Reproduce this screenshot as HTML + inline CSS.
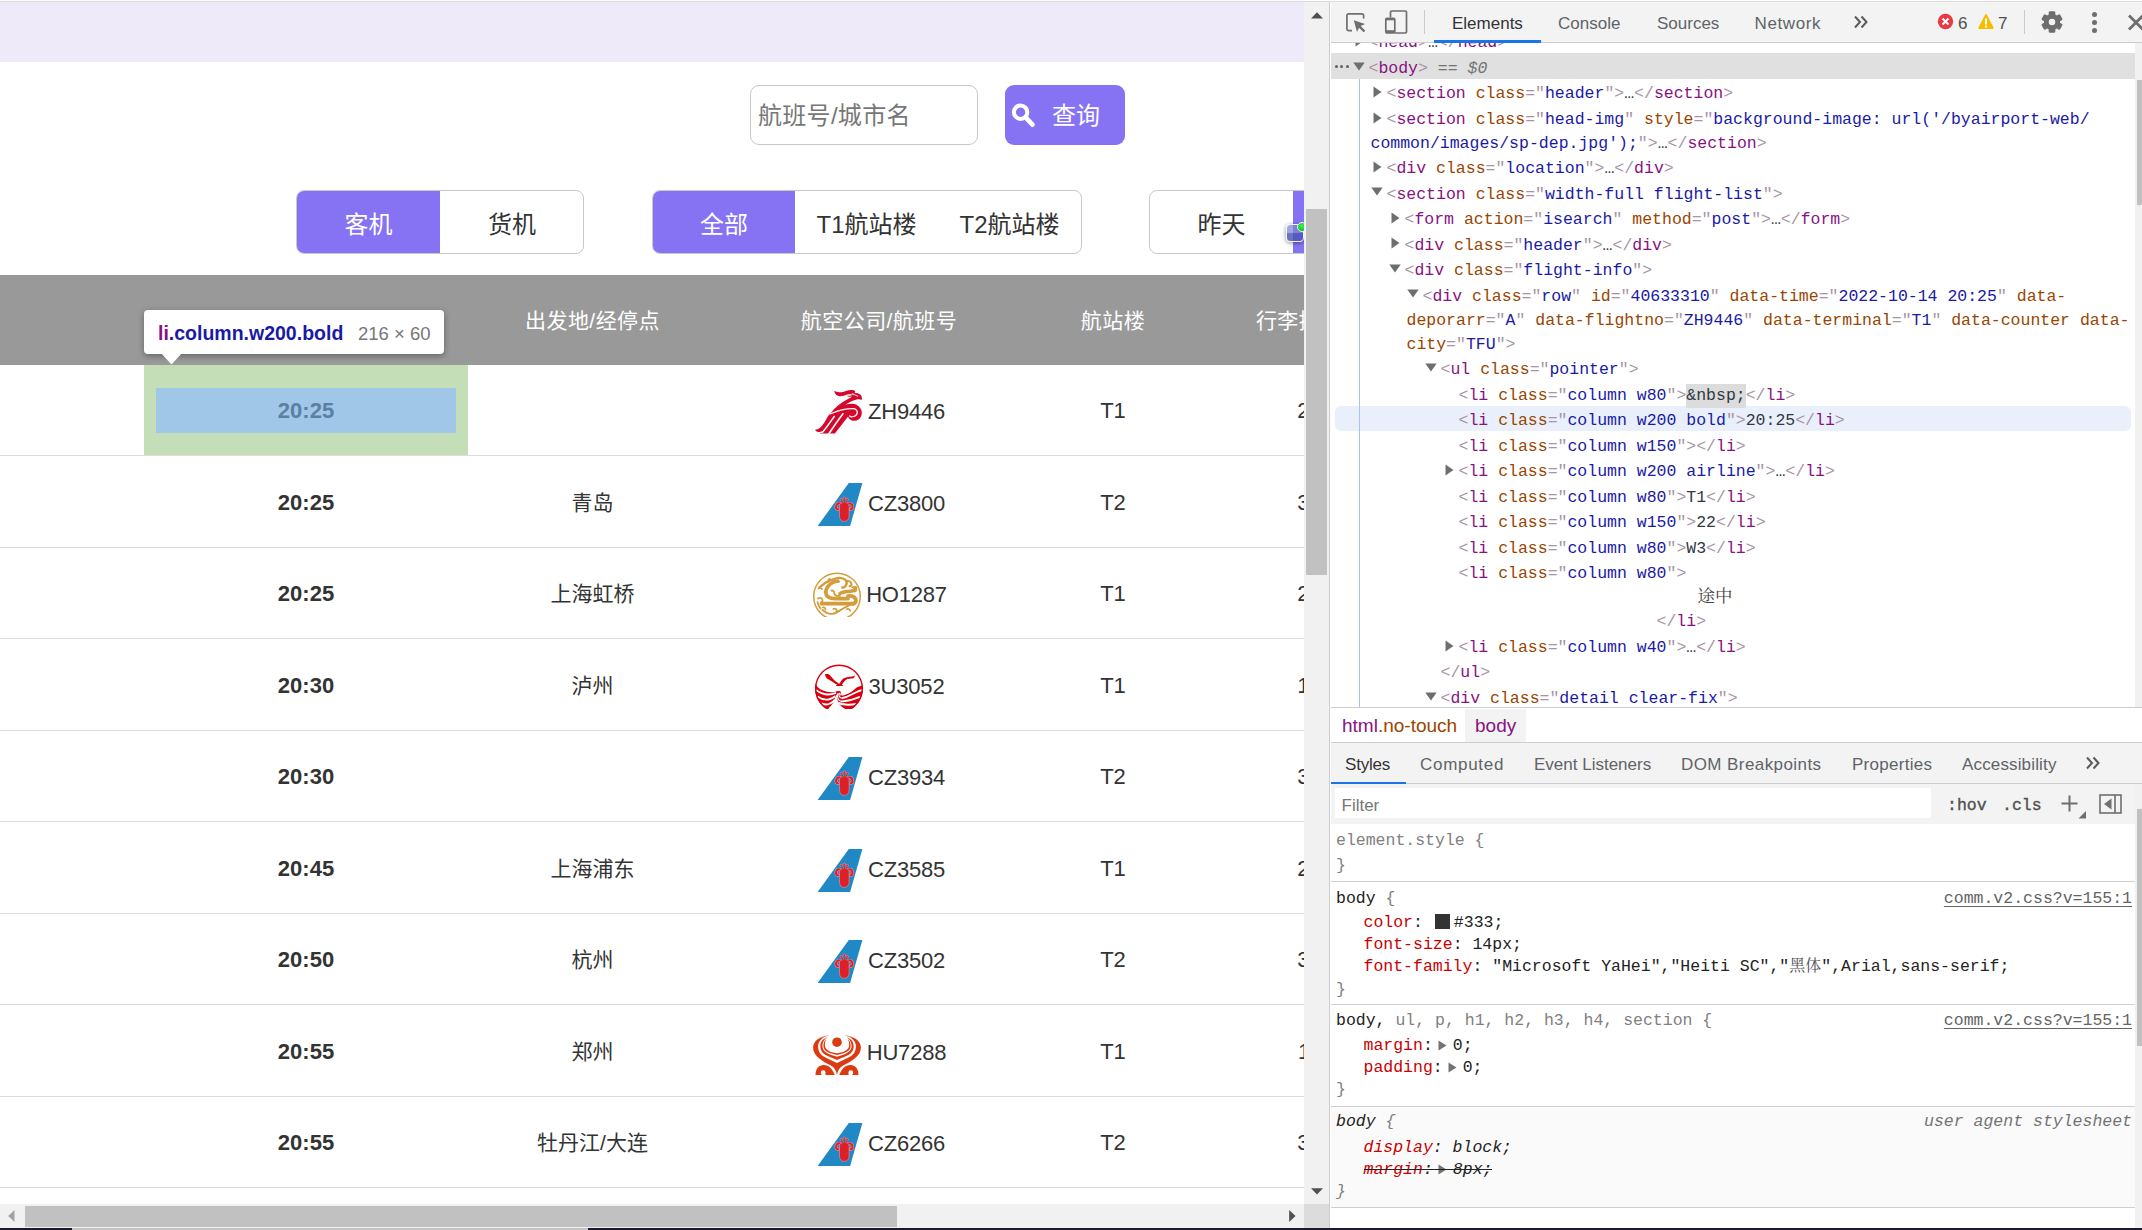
<!DOCTYPE html>
<html lang="zh-CN"><head><meta charset="utf-8"><title>Flight info</title>
<style>
*{box-sizing:border-box;margin:0;padding:0}
html,body{width:2142px;height:1230px;overflow:hidden;background:#fff}
body{position:relative;font-family:"Liberation Sans","Noto Sans CJK SC",sans-serif;color:#333}
.a{position:absolute}
.t{position:absolute;white-space:pre}
#page{position:absolute;left:0;top:0;width:1304px;height:1204px;overflow:hidden;background:#fff}
.band{left:0;top:0;width:1304px;height:62px;background:#efeaf9}
.inp{left:750px;top:85px;width:228px;height:60px;border:1px solid #c8c8c8;border-radius:9px;background:#fff}
.ph{left:758px;top:86.3px;height:60px;line-height:60px;font-size:24px;letter-spacing:.3px;color:#777}
.btn{left:1005px;top:85px;width:120px;height:60px;border-radius:9px;background:#8673f4}
.btnt{left:1052px;top:86.3px;height:60px;line-height:60px;font-size:24px;color:#fff}
.grp{top:190px;height:64px;border:1px solid #c8c8c8;border-radius:8px;background:#fff;overflow:hidden}
.tab{position:absolute;top:0;height:62px;line-height:67px;text-align:center;font-size:24px;color:#333;white-space:pre}
.tab.on{background:#8673f4;color:#fff}
.hdr{left:0;top:275px;width:1500px;height:90px;background:#999}
.hc{position:absolute;top:0;height:90px;line-height:92px;text-align:center;font-size:21px;letter-spacing:.45px;color:#fff;white-space:pre}
.row{position:absolute;left:0;width:1500px;height:91.5px}
.row:after{content:'';position:absolute;left:0;top:90px;width:1500px;height:1px;background:#dcdcdc}
.c{position:absolute;top:0;height:90px;line-height:92px;text-align:center;font-size:21px;color:#333;white-space:pre}
.c.b{font-weight:bold;font-size:22px;line-height:91px}
.c.l{font-size:22px}
.air{position:absolute;left:717px;width:324px;top:0;height:90px;text-align:center;white-space:nowrap;font-size:0}
.lg{display:inline-block;position:relative;width:48px;height:45px;vertical-align:top;margin-top:24px;clip-path:inset(0 -8px 0 -8px)}
.fn{display:inline-block;vertical-align:top;height:90px;line-height:93px;font-size:22px;letter-spacing:-0.2px;margin-left:7px;color:#333}

.m{font-family:"Liberation Mono",monospace;font-size:16.5px}
.u{font-family:"Liberation Sans",sans-serif;font-size:17px;color:#333}
.dl{position:absolute;white-space:pre;height:24px;line-height:24px;font-family:"Liberation Mono",monospace;font-size:16.5px;color:#303942}
.sl{position:absolute;white-space:pre;height:22px;line-height:22px;font-family:"Liberation Mono",monospace;font-size:16.5px;color:#222}
.k{color:#a894a6}.tn{color:#881280}.an{color:#994500}.av{color:#1a1aa6}.pn{color:#c80000}.g{color:#808080}
</style></head>
<body>
<div id="page">
<div class="a band"></div>
<div class="a inp"></div><div class="t ph">航班号/城市名</div>
<div class="a btn"></div>
<svg class="a" style="left:1009px;top:99px" width="30" height="30" viewBox="0 0 30 30"><circle cx="11.600" cy="13.200" r="6.700" fill="none" stroke="#fff" stroke-width="4"/><path d="M17 18.800L23.500 25.700" stroke="#fff" stroke-width="4.600" stroke-linecap="round"/></svg>
<div class="t btnt">查询</div>
<div class="a grp" style="left:296px;width:288px"><div class="tab on" style="left:0;width:143px">客机</div><div class="tab" style="left:143px;width:144px">货机</div></div>
<div class="a grp" style="left:652px;width:430px"><div class="tab on" style="left:0;width:142px">全部</div><div class="tab" style="left:142px;width:143px">T1航站楼</div><div class="tab" style="left:285px;width:143px">T2航站楼</div></div>
<div class="a grp" style="left:1149px;width:430px"><div class="tab" style="left:0;width:143px">昨天</div><div class="tab on" style="left:143px;width:143px">今天</div></div>
<div class="a hdr">
<div class="hc" style="left:468px;width:249px">出发地/经停点</div>
<div class="hc" style="left:717px;width:324px">航空公司/航班号</div>
<div class="hc" style="left:1041px;width:144px">航站楼</div>
<div class="hc" style="left:1185px;width:249px">行李提取处</div>
</div>
<div class="row" style="top:365.0px">
<div class="c b" style="left:144px;width:324px">20:25</div>
<div class="air"><span class="lg"><svg width="60" height="52" viewBox="0 0 60 52" style="position:absolute;left:-2.7px;top:-4.0px;overflow:visible"><g fill="#d5072a">
<path d="M24.1 6.100C28 8 33 7 36 5.900C39 4.900 42.500 4.600 44.200 5.400C45.200 6 45.400 7 45 7.700L42.500 8.600C41 9.300 39 9.400 37.200 9.500C34.500 10.700 32 11.300 29.600 11.200C27 11 25 9.500 24.100 6.100Z"/>
<path d="M21.100 27.700C25 22.500 31 17.500 37.500 14.300C39.500 13.300 41 12.500 42.200 11.600L39.500 11.800C38.300 11.800 37.300 11.300 37.200 10.700C38.500 10.700 40 10.300 41 9.500C42.500 8.300 44 7.800 46 7.900C48.500 8 50.500 9.200 51.400 11C52 12.300 52.200 13.500 52 14.700C50.300 14.100 48.400 14 46.500 14.400C42.500 15.400 38.600 17.600 35.100 19.900C37.500 18.900 40 18.600 42.300 18.800C45 19 47.300 19.900 48.900 21.500C50.800 23.300 51.900 25.700 51.800 28C51.700 30.600 50.600 33 48.500 34.500C46.500 35.900 44 36.200 41.800 35.400C39.800 34.600 38.400 33.200 38 31.500L40 29L24.900 48.600H9.700L11 46.900L8.500 46.900C6.800 46.800 5.300 46 5.100 44.800C7 44.600 9 43.800 10.600 42.300C13.500 39.500 15.500 35.500 17.500 32C18.500 30.500 19.500 29 21.100 27.700Z"/></g>
<g fill="none" stroke="#fff" stroke-linecap="round">
<path d="M20 29C28 25.600 37 23.500 43.500 23.700C46 24 47.600 25.800 47.300 27.600C47 29.500 45.500 30.800 43.500 31.500" stroke-width="1.300"/>
<path d="M42.500 31.800C41.500 32.100 40.300 31.800 39.600 31" stroke-width="1.200"/>
<path d="M24.200 31.500C21 36 17 42 12.700 47L10.500 47.500" stroke-width="1.600"/>
<path d="M33 28.800C28.500 34.500 23.500 42 18.600 49" stroke-width="1.600"/>
<path d="M42.600 9.200C44.500 9.700 46.300 10.400 47.800 11.200" stroke-width="0.900"/>
<path d="M38.500 10.600C39.800 10.800 41 10.400 42 9.700" stroke-width="0.800"/>
</g></svg></span><span class="fn">ZH9446</span></div>
<div class="c l" style="left:1041px;width:144px">T1</div>
<div class="c l" style="left:1185px;width:249px">22</div>
</div>
<div class="row" style="top:456.5px">
<div class="c b" style="left:144px;width:324px">20:25</div>
<div class="c" style="left:468px;width:249px">青岛</div>
<div class="air"><span class="lg" style="height:45.5px"><svg width="50" height="46" viewBox="0 0 50 46" style="position:absolute;left:0.0px;top:0.0px;overflow:visible"><path d="M4.400 45.300L35.800 2.100H49.400L37 45.300z" fill="#1f88c5"/>
<g fill="none" stroke="#f0a9ab" stroke-width="3" stroke-linecap="round"><path d="M27 22.600C22.800 21.300 21.800 27.600 25 28.500M35.600 22.600C39.800 21.300 40.800 27.600 37.600 28.500"/></g>
<g fill="none" stroke="#df1f27" stroke-width="2.100" stroke-linecap="round"><path d="M27 22.600C22.800 21.300 21.800 27.600 25 28.500M35.600 22.600C39.800 21.300 40.800 27.600 37.600 28.500"/></g>
<g fill="#df1f27" stroke="#f0a9ab" stroke-width="0.500">
<path d="M26.500 25C26.500 23 27.600 21.800 29.100 21.800L30.100 21.800L31.300 19.500L32.500 21.800L33.500 21.800C35 21.800 36.100 23 36.100 25L36.100 35C36.100 38.500 34.100 40.400 31.300 40.400C28.500 40.400 26.500 38.500 26.500 35Z"/>
<circle cx="31.300" cy="17.200" r="1.250"/><circle cx="28.300" cy="18.500" r="1.150"/><circle cx="34.300" cy="18.500" r="1.150"/></g>
<g fill="none" stroke="#df1f27" stroke-width="0.900"><path d="M31.300 18V21.500M28.500 19.300L29.900 22M34.100 19.300L32.700 22"/></g></svg></span><span class="fn">CZ3800</span></div>
<div class="c l" style="left:1041px;width:144px">T2</div>
<div class="c l" style="left:1185px;width:249px">31</div>
</div>
<div class="row" style="top:548.0px">
<div class="c b" style="left:144px;width:324px">20:25</div>
<div class="c" style="left:468px;width:249px">上海虹桥</div>
<div class="air"><span class="lg"><svg width="60" height="56" viewBox="0 0 60 56" style="position:absolute;left:-3.4px;top:-6.0px;overflow:visible"><g fill="none" stroke="#d29d3a" stroke-linecap="round" stroke-linejoin="round">
<circle cx="29" cy="30.500" r="23.300" stroke-width="1.500"/>
<path d="M11.500 21.300C14.500 18.500 18 16 21.500 14.600C24.500 13.500 27.500 12.200 30.700 11.900C33.500 11.700 36 12.300 37.500 14C38.900 15.700 38.800 18.300 37.600 20C36.800 21.200 35.500 21.700 34.300 21.500" stroke-width="2.400"/>
<path d="M38.500 15.300C40.500 14.600 42.700 15.700 43.400 17.600C43.900 19 43 20.200 41.500 20.300" stroke-width="2"/>
<path d="M21.500 13L20 15.500" stroke-width="2.400"/>
<path d="M30.500 15C26 15.500 22.300 17.300 20 20.300C18 23 17.300 26.300 18.500 29.200C19.800 31.600 23 32.600 26.500 32.600H40" stroke-width="3.700"/>
<path d="M23.500 24.500C25.200 24.300 26.300 25.500 26.300 27C26.300 28.300 27.300 29.500 29 29.800H32" stroke-width="1.800"/>
<path d="M32 27.500C35 25.800 39 25.500 42.500 25.300C45 25.100 47 23.800 47.600 22" stroke-width="3.600"/>
<path d="M44 21.300C45.300 20.300 47.300 20.700 48 22.200C48.700 23.700 48 25.200 46.700 25.700" stroke-width="1.700"/>
<path d="M40 30C43 29.500 46.500 30.500 47.600 33C48.500 35.200 47.500 37.300 45 38" stroke-width="3.800"/>
<path d="M13.500 37.700H45" stroke-width="3.700"/>
<path d="M10 32.500C11.500 31.300 13.800 31.800 14.400 33.500C14.800 34.600 14.300 35.600 13.300 35.900M10.300 22.500C11.500 21.300 13.500 21.700 14 23.200M9.500 36C10 38.500 11 40.500 12.500 42.500" stroke-width="1.700"/>
<path d="M14.500 41.500C16 41 17.500 42 17.500 43.500M25.300 43C26.800 42 28.800 43 28.800 44.800C28.800 46 28 46.800 27 47M38.800 43.200C40.300 42.500 42 43.300 42.200 44.800" stroke-width="1.700"/>
<path d="M47.800 35.500C44 38 39 40.500 35 42.500C31.500 44.500 29 47 25 47.700C21 48.300 17 46.500 14.500 43.900" stroke-width="1.900"/>
</g>
<circle cx="32.200" cy="14.300" r="1" fill="#fff"/></svg></span><span class="fn">HO1287</span></div>
<div class="c l" style="left:1041px;width:144px">T1</div>
<div class="c l" style="left:1185px;width:249px">23</div>
</div>
<div class="row" style="top:639.5px">
<div class="c b" style="left:144px;width:324px">20:30</div>
<div class="c" style="left:468px;width:249px">泸州</div>
<div class="air"><span class="lg" style="height:45.5px"><svg width="60" height="54" viewBox="0 0 60 54" style="position:absolute;left:-3.8px;top:-5.5px;overflow:visible"><defs><clipPath id="cpU"><circle cx="29" cy="30.500" r="24"/></clipPath></defs>
<g clip-path="url(#cpU)"><path d="M5 25.500C7 29 10 31.500 13.200 32.600C17 34.200 21 34.600 24.500 34C26.500 33.600 28.500 32.800 30.300 33.200C31.300 34.500 31 36.500 31.600 37.800C35 37.300 37.500 36.300 39.500 35.100C42.500 33.300 44 31.300 46.100 29.900C48 28.700 50 28 53 27.500V56H5z" fill="#d7000f"/>
<g fill="none" stroke="#fff" stroke-width="1.900">
<path d="M6 32C10 34.800 14 36.500 18 36.500C21 36.500 23.500 35.800 26 34.800"/>
<path d="M7.500 38.500C11 41 15 42 18.500 41.500C21 41 23.300 40 25.300 38.300"/>
<path d="M11.500 45.300C14.500 46.800 17.500 46.800 20 45.500C22 44.500 23.500 43.300 24.800 41.800"/>
<path d="M52 32C48 33 44.500 35 41.500 36.500C38.500 38.200 35 39.800 31.600 40.300"/>
<path d="M50 39C46.500 40 43 41.500 39.500 42.300C36.500 43 33.500 43.500 30.700 43.300"/>
<path d="M46 46C42.500 46.800 39 47 35.500 46.500C33 46.200 30.500 45.800 28.500 45"/>
</g>
<g fill="none" stroke="#fff" stroke-width="1.100"><path d="M31.600 40.300C29.700 39.600 28.500 37.500 28.900 35M30.700 43.300C28.300 42.200 27 39.200 27.600 35.500M28.500 45C26.800 43.300 26 40.300 26.400 36.800M29.500 34.800C30 35.600 30.300 36.500 30.600 37.300"/></g>
<path d="M25.300 38.300C24.800 43 22 47.800 17.300 51.500L36 51.500C31.500 49 27.800 45 26.200 40.500C25.800 39.800 25.500 39 25.300 38.300z" fill="#fff"/>
</g>
<circle cx="29" cy="30.500" r="23.300" fill="none" stroke="#d7000f" stroke-width="1.400"/>
<path d="M14.900 16.400C16.500 15.900 18 16.100 18.900 16.500C20.500 17.500 21.600 19.200 22.800 20.600C24.500 22.500 26.500 24.200 28.600 25.400L29.800 25.400C30.500 23.500 31.800 21.900 33.400 20.600C35 19.500 36.800 19.100 38.600 18.900C40.800 18.700 43 18.700 44.800 17.500C44.900 18.500 44.500 19.300 43.900 19.800C43.200 20.500 42.300 20.600 41.300 20.600C40 20.700 38.600 20.700 37.300 21.100C35.700 21.800 34.400 23.100 33.400 24.600C32.800 25.500 32.300 26.300 31.800 27L33.400 27.500L33 28.100H26.200L25.900 27.500L27.400 26.800C25.700 26.200 24.200 25.200 22.800 24.100C20.800 22.600 18.900 21.800 17.600 21.100C16.300 19.800 15.300 18.200 14.900 16.400Z" fill="#d7000f"/></svg></span><span class="fn">3U3052</span></div>
<div class="c l" style="left:1041px;width:144px">T1</div>
<div class="c l" style="left:1185px;width:249px">12</div>
</div>
<div class="row" style="top:731.0px">
<div class="c b" style="left:144px;width:324px">20:30</div>
<div class="air"><span class="lg"><svg width="50" height="46" viewBox="0 0 50 46" style="position:absolute;left:0.0px;top:0.0px;overflow:visible"><path d="M4.400 45.300L35.800 2.100H49.400L37 45.300z" fill="#1f88c5"/>
<g fill="none" stroke="#f0a9ab" stroke-width="3" stroke-linecap="round"><path d="M27 22.600C22.800 21.300 21.800 27.600 25 28.500M35.600 22.600C39.800 21.300 40.800 27.600 37.600 28.500"/></g>
<g fill="none" stroke="#df1f27" stroke-width="2.100" stroke-linecap="round"><path d="M27 22.600C22.800 21.300 21.800 27.600 25 28.500M35.600 22.600C39.800 21.300 40.800 27.600 37.600 28.500"/></g>
<g fill="#df1f27" stroke="#f0a9ab" stroke-width="0.500">
<path d="M26.500 25C26.500 23 27.600 21.800 29.100 21.800L30.100 21.800L31.300 19.500L32.500 21.800L33.500 21.800C35 21.800 36.100 23 36.100 25L36.100 35C36.100 38.500 34.100 40.400 31.300 40.400C28.500 40.400 26.500 38.500 26.500 35Z"/>
<circle cx="31.300" cy="17.200" r="1.250"/><circle cx="28.300" cy="18.500" r="1.150"/><circle cx="34.300" cy="18.500" r="1.150"/></g>
<g fill="none" stroke="#df1f27" stroke-width="0.900"><path d="M31.300 18V21.500M28.500 19.300L29.900 22M34.100 19.300L32.700 22"/></g></svg></span><span class="fn">CZ3934</span></div>
<div class="c l" style="left:1041px;width:144px">T2</div>
<div class="c l" style="left:1185px;width:249px">32</div>
</div>
<div class="row" style="top:822.5px">
<div class="c b" style="left:144px;width:324px">20:45</div>
<div class="c" style="left:468px;width:249px">上海浦东</div>
<div class="air"><span class="lg" style="height:45.5px"><svg width="50" height="46" viewBox="0 0 50 46" style="position:absolute;left:0.0px;top:0.0px;overflow:visible"><path d="M4.400 45.300L35.800 2.100H49.400L37 45.300z" fill="#1f88c5"/>
<g fill="none" stroke="#f0a9ab" stroke-width="3" stroke-linecap="round"><path d="M27 22.600C22.800 21.300 21.800 27.600 25 28.500M35.600 22.600C39.800 21.300 40.800 27.600 37.600 28.500"/></g>
<g fill="none" stroke="#df1f27" stroke-width="2.100" stroke-linecap="round"><path d="M27 22.600C22.800 21.300 21.800 27.600 25 28.500M35.600 22.600C39.800 21.300 40.800 27.600 37.600 28.500"/></g>
<g fill="#df1f27" stroke="#f0a9ab" stroke-width="0.500">
<path d="M26.500 25C26.500 23 27.600 21.800 29.100 21.800L30.100 21.800L31.300 19.500L32.500 21.800L33.500 21.800C35 21.800 36.100 23 36.100 25L36.100 35C36.100 38.500 34.100 40.400 31.300 40.400C28.500 40.400 26.500 38.500 26.500 35Z"/>
<circle cx="31.300" cy="17.200" r="1.250"/><circle cx="28.300" cy="18.500" r="1.150"/><circle cx="34.300" cy="18.500" r="1.150"/></g>
<g fill="none" stroke="#df1f27" stroke-width="0.900"><path d="M31.300 18V21.500M28.500 19.300L29.900 22M34.100 19.300L32.700 22"/></g></svg></span><span class="fn">CZ3585</span></div>
<div class="c l" style="left:1041px;width:144px">T1</div>
<div class="c l" style="left:1185px;width:249px">21</div>
</div>
<div class="row" style="top:914.0px">
<div class="c b" style="left:144px;width:324px">20:50</div>
<div class="c" style="left:468px;width:249px">杭州</div>
<div class="air"><span class="lg"><svg width="50" height="46" viewBox="0 0 50 46" style="position:absolute;left:0.0px;top:0.0px;overflow:visible"><path d="M4.400 45.300L35.800 2.100H49.400L37 45.300z" fill="#1f88c5"/>
<g fill="none" stroke="#f0a9ab" stroke-width="3" stroke-linecap="round"><path d="M27 22.600C22.800 21.300 21.800 27.600 25 28.500M35.600 22.600C39.800 21.300 40.800 27.600 37.600 28.500"/></g>
<g fill="none" stroke="#df1f27" stroke-width="2.100" stroke-linecap="round"><path d="M27 22.600C22.800 21.300 21.800 27.600 25 28.500M35.600 22.600C39.800 21.300 40.800 27.600 37.600 28.500"/></g>
<g fill="#df1f27" stroke="#f0a9ab" stroke-width="0.500">
<path d="M26.500 25C26.500 23 27.600 21.800 29.100 21.800L30.100 21.800L31.300 19.500L32.500 21.800L33.500 21.800C35 21.800 36.100 23 36.100 25L36.100 35C36.100 38.500 34.100 40.400 31.300 40.400C28.500 40.400 26.500 38.500 26.500 35Z"/>
<circle cx="31.300" cy="17.200" r="1.250"/><circle cx="28.300" cy="18.500" r="1.150"/><circle cx="34.300" cy="18.500" r="1.150"/></g>
<g fill="none" stroke="#df1f27" stroke-width="0.900"><path d="M31.300 18V21.500M28.500 19.300L29.900 22M34.100 19.300L32.700 22"/></g></svg></span><span class="fn">CZ3502</span></div>
<div class="c l" style="left:1041px;width:144px">T2</div>
<div class="c l" style="left:1185px;width:249px">33</div>
</div>
<div class="row" style="top:1005.5px">
<div class="c b" style="left:144px;width:324px">20:55</div>
<div class="c" style="left:468px;width:249px">郑州</div>
<div class="air"><span class="lg" style="height:45.5px"><svg width="60" height="54" viewBox="0 0 60 54" style="position:absolute;left:-3.3px;top:-3.5px;overflow:visible"><defs><linearGradient id="hf" x1="0" y1="0" x2="0" y2="1"><stop offset="0" stop-color="#fff"/><stop offset="1" stop-color="#fff" stop-opacity="0"/></linearGradient></defs><path d="M29 49.500C28.600 45 26.500 41.500 22.500 39.300C15 35.500 5.100 30.500 5.100 21.500C5.100 15 12 10.500 21 8.800L37 8.800C46 10.500 52.900 15 52.900 21.500C52.900 30.500 43 35.500 35.500 39.300C31.500 41.500 29.400 45 29 49.500Z" fill="#dc3b12"/><path d="M29.0 37.0C18.6 31.8 10.1 30.4 10.1 20.5C10.1 15.2 13.9 11.4 20.5 9.8L37.5 9.8C44.1 11.4 47.9 15.2 47.9 20.5C47.9 30.4 39.4 31.8 29.0 37.0Z" fill="#fff"/><path d="M29.0 33.9C19.8 30.0 12.3 28.5 12.3 20.3C12.3 15.4 15.6 12.1 21.5 10.6L36.5 10.6C42.4 12.1 45.7 15.4 45.7 20.3C45.7 28.5 38.2 30.0 29.0 33.9Z" fill="#dc3b12"/><path d="M29.0 30.8C21.0 28.2 14.4 26.5 14.4 20.0C14.4 15.1 17.3 11.7 22.4 10.2L35.6 10.2C40.7 11.7 43.6 15.1 43.6 20.0C43.6 26.5 37.0 28.2 29.0 30.8Z" fill="#fff"/><path d="M29.0 29.1C20.8 27.1 15.4 25.4 15.4 19.8C15.4 15.3 18.1 12.2 22.9 10.8L35.1 10.8C39.9 12.2 42.6 15.3 42.6 19.8C42.6 25.4 37.2 27.1 29.0 29.1Z" fill="#dc3b12"/><path d="M29.0 27.3C21.5 26.2 16.9 24.0 16.9 19.0C16.9 13.5 19.3 9.7 23.6 8.0L34.4 8.0C38.7 9.7 41.1 13.5 41.1 19.0C41.1 24.0 36.5 26.2 29.0 27.3Z" fill="#fff"/><rect x="20.500" y="6" width="17" height="5.500" fill="#fff"/><rect x="5" y="7" width="48" height="6" fill="url(#hf)"/><circle cx="29" cy="16.200" r="4.800" fill="#dc3b12"/><path d="M7.500 50C7.200 44.500 9.500 39.600 15 39C20.500 38.500 24.300 42.500 27.300 50Z" fill="#dc3b12"/><path d="M50.500 50C50.800 44.500 48.500 39.600 43 39C37.500 38.500 33.700 42.500 30.700 50Z" fill="#dc3b12"/><circle cx="15.200" cy="46.700" r="2.400" fill="#fff"/><circle cx="42.800" cy="46.700" r="2.400" fill="#fff"/><path d="M13.500 49.500H17.200L17.400 47.500z" fill="#fff"/><path d="M44.500 49.500H40.800L40.600 47.500z" fill="#fff"/><path d="M24.400 41.300C26 43.500 27.200 46.500 27.900 49.500M33.600 41.300C32 43.500 30.800 46.500 30.100 49.500" fill="none" stroke="#fff" stroke-width="0.800"/></svg></span><span class="fn">HU7288</span></div>
<div class="c l" style="left:1041px;width:144px">T1</div>
<div class="c l" style="left:1185px;width:249px">11</div>
</div>
<div class="row" style="top:1097.0px">
<div class="c b" style="left:144px;width:324px">20:55</div>
<div class="c" style="left:468px;width:249px">牡丹江/大连</div>
<div class="air"><span class="lg"><svg width="50" height="46" viewBox="0 0 50 46" style="position:absolute;left:0.0px;top:0.0px;overflow:visible"><path d="M4.400 45.300L35.800 2.100H49.400L37 45.300z" fill="#1f88c5"/>
<g fill="none" stroke="#f0a9ab" stroke-width="3" stroke-linecap="round"><path d="M27 22.600C22.800 21.300 21.800 27.600 25 28.500M35.600 22.600C39.800 21.300 40.800 27.600 37.600 28.500"/></g>
<g fill="none" stroke="#df1f27" stroke-width="2.100" stroke-linecap="round"><path d="M27 22.600C22.800 21.300 21.800 27.600 25 28.500M35.600 22.600C39.800 21.300 40.800 27.600 37.600 28.500"/></g>
<g fill="#df1f27" stroke="#f0a9ab" stroke-width="0.500">
<path d="M26.500 25C26.500 23 27.600 21.800 29.100 21.800L30.100 21.800L31.300 19.500L32.500 21.800L33.500 21.800C35 21.800 36.100 23 36.100 25L36.100 35C36.100 38.500 34.100 40.400 31.300 40.400C28.500 40.400 26.500 38.500 26.500 35Z"/>
<circle cx="31.300" cy="17.200" r="1.250"/><circle cx="28.300" cy="18.500" r="1.150"/><circle cx="34.300" cy="18.500" r="1.150"/></g>
<g fill="none" stroke="#df1f27" stroke-width="0.900"><path d="M31.300 18V21.500M28.500 19.300L29.900 22M34.100 19.300L32.700 22"/></g></svg></span><span class="fn">CZ6266</span></div>
<div class="c l" style="left:1041px;width:144px">T2</div>
<div class="c l" style="left:1185px;width:249px">34</div>
</div>
<div class="row" style="top:1188.5px">
<div class="c b" style="left:144px;width:324px">21:00</div>
<div class="c" style="left:468px;width:249px">北京</div>
<div class="air"><span class="lg" style="height:45.5px"><svg width="50" height="46" viewBox="0 0 50 46" style="position:absolute;left:0.0px;top:0.0px;overflow:visible"><path d="M4.400 45.300L35.800 2.100H49.400L37 45.300z" fill="#1f88c5"/>
<g fill="none" stroke="#f0a9ab" stroke-width="3" stroke-linecap="round"><path d="M27 22.600C22.800 21.300 21.800 27.600 25 28.500M35.600 22.600C39.800 21.300 40.800 27.600 37.600 28.500"/></g>
<g fill="none" stroke="#df1f27" stroke-width="2.100" stroke-linecap="round"><path d="M27 22.600C22.800 21.300 21.800 27.600 25 28.500M35.600 22.600C39.800 21.300 40.800 27.600 37.600 28.500"/></g>
<g fill="#df1f27" stroke="#f0a9ab" stroke-width="0.500">
<path d="M26.500 25C26.500 23 27.600 21.800 29.100 21.800L30.100 21.800L31.300 19.500L32.500 21.800L33.500 21.800C35 21.800 36.100 23 36.100 25L36.100 35C36.100 38.500 34.100 40.400 31.300 40.400C28.500 40.400 26.500 38.500 26.500 35Z"/>
<circle cx="31.300" cy="17.200" r="1.250"/><circle cx="28.300" cy="18.500" r="1.150"/><circle cx="34.300" cy="18.500" r="1.150"/></g>
<g fill="none" stroke="#df1f27" stroke-width="0.900"><path d="M31.300 18V21.500M28.500 19.300L29.900 22M34.100 19.300L32.700 22"/></g></svg></span><span class="fn">CA1405</span></div>
<div class="c l" style="left:1041px;width:144px">T2</div>
<div class="c l" style="left:1185px;width:249px">35</div>
</div>
<div class="a" style="left:144px;top:365px;width:324px;height:90px;background:rgba(147,196,125,.55)"></div>
<div class="a" style="left:156px;top:387.5px;width:300px;height:45px;background:#fff"></div>
<div class="a" style="left:156px;top:387.5px;width:300px;height:45px;background:rgba(111,168,220,.66)"></div>
<div class="t" style="left:144px;width:324px;top:365px;height:90px;line-height:91px;text-align:center;font-size:22px;font-weight:bold;color:#5b80a3">20:25</div>
<div class="a" style="left:144px;top:310px;width:300px;height:44px;background:#fff;border-radius:4px;box-shadow:0 2px 6px rgba(0,0,0,.35)"></div>
<svg class="a" style="left:158px;top:353px" width="28" height="14" viewBox="0 0 28 14"><path d="M3 0H24L13.500 11.500z" fill="#fff"/></svg>
<div class="t" style="left:158px;top:310.8px;height:44px;line-height:44px;font-size:19.500px;font-weight:bold;color:#1a1aa6"><span style="color:#881280">li</span>.column.w200.bold</div>
<div class="t" style="left:358px;top:311.6px;height:44px;line-height:44px;font-size:18.500px;color:#777">216 × 60</div>
<div class="a" style="left:1285.5px;top:223.5px;width:18.5px;height:18.5px;border-radius:4.5px;background:linear-gradient(180deg,rgba(125,134,205,.72) 0,rgba(125,134,205,.72) 46%,rgba(72,86,178,.82) 54%,rgba(72,86,178,.82) 100%);border:1.3px solid rgba(255,255,255,.92);box-shadow:0 1px 4px rgba(0,0,0,.45)"></div>
<div class="a" style="left:1296.5px;top:221.5px;width:10.5px;height:10.5px;border-radius:5.3px;background:radial-gradient(circle at 50% 35%,#4fe35c 0,#18e030 45%,#12a02a 100%);border:1.2px solid #f4ecff"></div>
</div>
<div class="a" style="left:0;top:0;width:2142px;height:1px;background:#fdfdfe"></div>
<div class="a" style="left:0;top:1px;width:2142px;height:1px;background:#dadce0"></div>
<div class="a" style="left:1304px;top:2px;width:25px;height:1202px;background:#f1f1f1"></div>
<div class="a" style="left:1306px;top:209px;width:21px;height:366px;background:#c1c1c1"></div>
<svg class="a" style="left:1309px;top:11px" width="16" height="9" viewBox="0 0 16 9"><path d="M2 7.500L8 1.200L14 7.500z" fill="#505050"/></svg>
<svg class="a" style="left:1309px;top:1187px" width="16" height="9" viewBox="0 0 16 9"><path d="M2 1.200L8 7.500L14 1.200z" fill="#505050"/></svg>
<div class="a" style="left:0;top:1204px;width:1304px;height:24px;background:#f1f1f1"></div>
<div class="a" style="left:25px;top:1206px;width:872px;height:21px;background:#c1c1c1"></div>
<svg class="a" style="left:7px;top:1208px" width="9" height="16" viewBox="0 0 9 16"><path d="M7.500 2L1.200 8L7.500 14z" fill="#a3a3a3"/></svg>
<svg class="a" style="left:1288px;top:1208px" width="9" height="16" viewBox="0 0 9 16"><path d="M1.200 2L7.500 8L1.200 14z" fill="#505050"/></svg>
<div class="a" style="left:1304px;top:1204px;width:25px;height:24px;background:#dcdcdc"></div>
<div class="a" style="left:1329px;top:2px;width:1px;height:1226px;background:#cdcdcd"></div><div class="a" style="left:1330px;top:2px;width:1px;height:1226px;background:#fff"></div>
<div class="a" style="left:0;top:1228px;width:2142px;height:2px;background:#1b1b2d"></div>
<div class="a" style="left:72px;top:1228px;width:516px;height:2px;background:#c4c4c4"></div>
<div class="a" style="left:1331px;top:2px;width:811px;height:1226px;background:#fff"></div>
<div class="a" style="left:1331px;top:53px;width:804px;height:26px;background:#e0e0e0"></div>
<div class="a" style="left:1335px;top:406px;width:1796px;height:0"></div>
<div class="a" style="left:1335px;top:406px;width:796px;height:24.5px;border-radius:6px;background:#e9f0fb"></div>
<div class="a" style="left:1359px;top:79px;width:1px;height:628px;background:#a9c3ec"></div>
<svg class="a" style="left:1355.0px;top:35.0px" width="9" height="12" viewBox="0 0 9 12"><path d="M0.500 0.500L8.500 6L0.500 11.500z" fill="#6e6e6e"/></svg>
<svg class="a" style="left:1353.0px;top:61.5px" width="12" height="9" viewBox="0 0 12 9"><path d="M0.300 0.500H11.700L6 8.500z" fill="#6e6e6e"/></svg>
<svg class="a" style="left:1373.0px;top:86.0px" width="9" height="12" viewBox="0 0 9 12"><path d="M0.500 0.500L8.500 6L0.500 11.500z" fill="#6e6e6e"/></svg>
<svg class="a" style="left:1373.0px;top:111.5px" width="9" height="12" viewBox="0 0 9 12"><path d="M0.500 0.500L8.500 6L0.500 11.500z" fill="#6e6e6e"/></svg>
<svg class="a" style="left:1373.0px;top:160.9px" width="9" height="12" viewBox="0 0 9 12"><path d="M0.500 0.500L8.500 6L0.500 11.500z" fill="#6e6e6e"/></svg>
<svg class="a" style="left:1371.0px;top:187.4px" width="12" height="9" viewBox="0 0 12 9"><path d="M0.300 0.500H11.700L6 8.500z" fill="#6e6e6e"/></svg>
<svg class="a" style="left:1391.0px;top:211.9px" width="9" height="12" viewBox="0 0 9 12"><path d="M0.500 0.500L8.500 6L0.500 11.500z" fill="#6e6e6e"/></svg>
<svg class="a" style="left:1391.0px;top:237.4px" width="9" height="12" viewBox="0 0 9 12"><path d="M0.500 0.500L8.500 6L0.500 11.500z" fill="#6e6e6e"/></svg>
<svg class="a" style="left:1389.0px;top:263.9px" width="12" height="9" viewBox="0 0 12 9"><path d="M0.300 0.500H11.700L6 8.500z" fill="#6e6e6e"/></svg>
<svg class="a" style="left:1407.0px;top:289.4px" width="12" height="9" viewBox="0 0 12 9"><path d="M0.300 0.500H11.700L6 8.500z" fill="#6e6e6e"/></svg>
<svg class="a" style="left:1425.0px;top:362.9px" width="12" height="9" viewBox="0 0 12 9"><path d="M0.300 0.500H11.700L6 8.500z" fill="#6e6e6e"/></svg>
<svg class="a" style="left:1445.0px;top:463.9px" width="9" height="12" viewBox="0 0 9 12"><path d="M0.500 0.500L8.500 6L0.500 11.500z" fill="#6e6e6e"/></svg>
<svg class="a" style="left:1445.0px;top:639.5px" width="9" height="12" viewBox="0 0 9 12"><path d="M0.500 0.500L8.500 6L0.500 11.500z" fill="#6e6e6e"/></svg>
<svg class="a" style="left:1425.0px;top:691.5px" width="12" height="9" viewBox="0 0 12 9"><path d="M0.300 0.500H11.700L6 8.500z" fill="#6e6e6e"/></svg>
<div class="dl" style="left:1368.5px;top:31.3px"><span class="k">&lt;</span><span class="tn">head</span><span class="k">&gt;</span>…<span class="k">&lt;/</span><span class="tn">head</span><span class="k">&gt;</span></div>
<div class="dl" style="left:1368.5px;top:56.8px"><span class="k">&lt;</span><span class="tn">body</span><span class="k">&gt;</span><span style="color:#737373;font-style:italic"> == $0</span></div>
<div class="dl" style="left:1386.5px;top:82.2px"><span class="k">&lt;</span><span class="tn">section</span> <span class="an">class</span><span class="k">=&quot;</span><span class="av">header</span><span class="k">&quot;</span><span class="k">&gt;</span>…<span class="k">&lt;/</span><span class="tn">section</span><span class="k">&gt;</span></div>
<div class="dl" style="left:1386.5px;top:107.8px"><span class="k">&lt;</span><span class="tn">section</span> <span class="an">class</span><span class="k">=&quot;</span><span class="av">head-img</span><span class="k">&quot;</span> <span class="an">style</span><span class="k">=&quot;</span><span class="av">background-image: url(&#x27;/byairport-web/</span></div>
<div class="dl" style="left:1370.5px;top:131.8px"><span class="av">common/images/sp-dep.jpg&#x27;);</span><span class="k">&quot;&gt;</span>…<span class="k">&lt;/</span><span class="tn">section</span><span class="k">&gt;</span></div>
<div class="dl" style="left:1386.5px;top:157.2px"><span class="k">&lt;</span><span class="tn">div</span> <span class="an">class</span><span class="k">=&quot;</span><span class="av">location</span><span class="k">&quot;</span><span class="k">&gt;</span>…<span class="k">&lt;/</span><span class="tn">div</span><span class="k">&gt;</span></div>
<div class="dl" style="left:1386.5px;top:182.8px"><span class="k">&lt;</span><span class="tn">section</span> <span class="an">class</span><span class="k">=&quot;</span><span class="av">width-full flight-list</span><span class="k">&quot;</span><span class="k">&gt;</span></div>
<div class="dl" style="left:1404.5px;top:208.2px"><span class="k">&lt;</span><span class="tn">form</span> <span class="an">action</span><span class="k">=&quot;</span><span class="av">isearch</span><span class="k">&quot;</span> <span class="an">method</span><span class="k">=&quot;</span><span class="av">post</span><span class="k">&quot;</span><span class="k">&gt;</span>…<span class="k">&lt;/</span><span class="tn">form</span><span class="k">&gt;</span></div>
<div class="dl" style="left:1404.5px;top:233.8px"><span class="k">&lt;</span><span class="tn">div</span> <span class="an">class</span><span class="k">=&quot;</span><span class="av">header</span><span class="k">&quot;</span><span class="k">&gt;</span>…<span class="k">&lt;/</span><span class="tn">div</span><span class="k">&gt;</span></div>
<div class="dl" style="left:1404.5px;top:259.2px"><span class="k">&lt;</span><span class="tn">div</span> <span class="an">class</span><span class="k">=&quot;</span><span class="av">flight-info</span><span class="k">&quot;</span><span class="k">&gt;</span></div>
<div class="dl" style="left:1422.5px;top:284.8px"><span class="k">&lt;</span><span class="tn">div</span> <span class="an">class</span><span class="k">=&quot;</span><span class="av">row</span><span class="k">&quot;</span> <span class="an">id</span><span class="k">=&quot;</span><span class="av">40633310</span><span class="k">&quot;</span> <span class="an">data-time</span><span class="k">=&quot;</span><span class="av">2022-10-14 20:25</span><span class="k">&quot;</span> <span class="an">data-</span></div>
<div class="dl" style="left:1406.5px;top:308.8px"><span class="an">deporarr</span><span class="k">=&quot;</span><span class="av">A</span><span class="k">&quot;</span> <span class="an">data-flightno</span><span class="k">=&quot;</span><span class="av">ZH9446</span><span class="k">&quot;</span> <span class="an">data-terminal</span><span class="k">=&quot;</span><span class="av">T1</span><span class="k">&quot;</span> <span class="an">data-counter</span> <span class="an">data-</span></div>
<div class="dl" style="left:1406.5px;top:332.8px"><span class="an">city</span><span class="k">=&quot;</span><span class="av">TFU</span><span class="k">&quot;&gt;</span></div>
<div class="dl" style="left:1440.5px;top:358.2px"><span class="k">&lt;</span><span class="tn">ul</span> <span class="an">class</span><span class="k">=&quot;</span><span class="av">pointer</span><span class="k">&quot;</span><span class="k">&gt;</span></div>
<div class="dl" style="left:1458.5px;top:383.8px"><span class="k">&lt;</span><span class="tn">li</span> <span class="an">class</span><span class="k">=&quot;</span><span class="av">column w80</span><span class="k">&quot;</span><span class="k">&gt;</span><span style="background:#dcdcdc;padding:2px 0 3px">&amp;nbsp;</span><span class="k">&lt;/</span><span class="tn">li</span><span class="k">&gt;</span></div>
<div class="dl" style="left:1458.5px;top:409.2px"><span class="k">&lt;</span><span class="tn">li</span> <span class="an">class</span><span class="k">=&quot;</span><span class="av">column w200 bold</span><span class="k">&quot;</span><span class="k">&gt;</span>20:25<span class="k">&lt;/</span><span class="tn">li</span><span class="k">&gt;</span></div>
<div class="dl" style="left:1458.5px;top:434.8px"><span class="k">&lt;</span><span class="tn">li</span> <span class="an">class</span><span class="k">=&quot;</span><span class="av">column w150</span><span class="k">&quot;</span><span class="k">&gt;</span><span class="k">&lt;/</span><span class="tn">li</span><span class="k">&gt;</span></div>
<div class="dl" style="left:1458.5px;top:460.2px"><span class="k">&lt;</span><span class="tn">li</span> <span class="an">class</span><span class="k">=&quot;</span><span class="av">column w200 airline</span><span class="k">&quot;</span><span class="k">&gt;</span>…<span class="k">&lt;/</span><span class="tn">li</span><span class="k">&gt;</span></div>
<div class="dl" style="left:1458.5px;top:485.8px"><span class="k">&lt;</span><span class="tn">li</span> <span class="an">class</span><span class="k">=&quot;</span><span class="av">column w80</span><span class="k">&quot;</span><span class="k">&gt;</span>T1<span class="k">&lt;/</span><span class="tn">li</span><span class="k">&gt;</span></div>
<div class="dl" style="left:1458.5px;top:511.3px"><span class="k">&lt;</span><span class="tn">li</span> <span class="an">class</span><span class="k">=&quot;</span><span class="av">column w150</span><span class="k">&quot;</span><span class="k">&gt;</span>22<span class="k">&lt;/</span><span class="tn">li</span><span class="k">&gt;</span></div>
<div class="dl" style="left:1458.5px;top:536.8px"><span class="k">&lt;</span><span class="tn">li</span> <span class="an">class</span><span class="k">=&quot;</span><span class="av">column w80</span><span class="k">&quot;</span><span class="k">&gt;</span>W3<span class="k">&lt;/</span><span class="tn">li</span><span class="k">&gt;</span></div>
<div class="dl" style="left:1458.5px;top:562.2px"><span class="k">&lt;</span><span class="tn">li</span> <span class="an">class</span><span class="k">=&quot;</span><span class="av">column w80</span><span class="k">&quot;</span><span class="k">&gt;</span></div>
<div class="dl" style="left:1697.6px;top:586.2px"><span style="font-family:'Noto Serif CJK SC',serif;font-size:17.5px;line-height:0;color:#444">途中</span></div>
<div class="dl" style="left:1656.5px;top:610.2px"><span class="k">&lt;/</span><span class="tn">li</span><span class="k">&gt;</span></div>
<div class="dl" style="left:1458.5px;top:635.8px"><span class="k">&lt;</span><span class="tn">li</span> <span class="an">class</span><span class="k">=&quot;</span><span class="av">column w40</span><span class="k">&quot;</span><span class="k">&gt;</span>…<span class="k">&lt;/</span><span class="tn">li</span><span class="k">&gt;</span></div>
<div class="dl" style="left:1440.5px;top:661.2px"><span class="k">&lt;/</span><span class="tn">ul</span><span class="k">&gt;</span></div>
<div class="dl" style="left:1440.5px;top:686.8px"><span class="k">&lt;</span><span class="tn">div</span> <span class="an">class</span><span class="k">=&quot;</span><span class="av">detail clear-fix</span><span class="k">&quot;</span><span class="k">&gt;</span></div>
<div class="a" style="left:1334.5px;top:65px;width:3px;height:3px;border-radius:1.5px;background:#5f5f5f"></div>
<div class="a" style="left:1340.1px;top:65px;width:3px;height:3px;border-radius:1.5px;background:#5f5f5f"></div>
<div class="a" style="left:1345.7px;top:65px;width:3px;height:3px;border-radius:1.5px;background:#5f5f5f"></div>
<div class="a" style="left:2135px;top:43px;width:7px;height:664px;background:#f1f1f1"></div>
<div class="a" style="left:2137px;top:80px;width:5px;height:125px;background:#c1c1c1"></div>
<div class="a" style="left:1331px;top:2px;width:811px;height:40px;background:#f3f3f3"></div>
<div class="a" style="left:1331px;top:42px;width:811px;height:1px;background:#cbcdd1"></div>
<div class="a" style="left:1434px;top:40px;width:107px;height:3px;background:#1a73e8"></div>
<svg class="a" style="left:1344px;top:11px" width="24" height="24" viewBox="0 0 24 24"><path d="M19.600 7.500V4.500a1.600 1.600 0 0 0-1.600-1.600H4.500A1.600 1.600 0 0 0 2.900 4.500V18a1.600 1.600 0 0 0 1.600 1.600H8" fill="none" stroke="#6e6e6e" stroke-width="1.700"/><path d="M9.800 9.300L21 13L16.700 15L21.300 19.700L19.600 21.300L15 16.700L13 21z" fill="#6e6e6e"/></svg>
<svg class="a" style="left:1384px;top:9px" width="25" height="26" viewBox="0 0 25 26"><path d="M6.500 8.500V3.300a1.300 1.300 0 0 1 1.300-1.300H21.200A1.300 1.300 0 0 1 22.500 3.300V22.700A1.300 1.300 0 0 1 21.200 24H11" fill="none" stroke="#6e6e6e" stroke-width="1.700"/><rect x="1.800" y="9.300" width="9" height="14.700" rx="1.200" fill="none" stroke="#6e6e6e" stroke-width="1.700"/><rect x="1.800" y="21.200" width="9" height="2.800" fill="#6e6e6e"/><rect x="1.800" y="9.300" width="9" height="2" fill="#6e6e6e"/></svg>
<div class="a" style="left:1424px;top:10px;width:1px;height:24px;background:#ccc"></div>
<div class="t u" style="left:1452.0px;top:4px;height:40px;line-height:40px;letter-spacing:0.00px;color:#333">Elements</div>
<div class="t u" style="left:1558.0px;top:4px;height:40px;line-height:40px;letter-spacing:0.00px;color:#5f6368">Console</div>
<div class="t u" style="left:1657.0px;top:4px;height:40px;line-height:40px;letter-spacing:0.00px;color:#5f6368">Sources</div>
<div class="t u" style="left:1754.5px;top:4px;height:40px;line-height:40px;letter-spacing:0.60px;color:#5f6368">Network</div>
<svg class="a" style="left:1853px;top:14px" width="16" height="16" viewBox="0 0 16 16"><path d="M2 2.500L7 8L2 13.500M8.500 2.500L13.500 8L8.500 13.500" fill="none" stroke="#5a5a5a" stroke-width="2"/></svg>
<svg class="a" style="left:1937px;top:13px" width="17" height="17" viewBox="0 0 17 17"><circle cx="8.500" cy="8.500" r="7.700" fill="#eb3941"/><path d="M5.500 5.500L11.500 11.500M11.500 5.500L5.500 11.500" stroke="#fff" stroke-width="2"/></svg>
<div class="t u" style="left:1958px;top:4px;height:40px;line-height:40px;color:#505050">6</div>
<svg class="a" style="left:1977px;top:13px" width="18" height="17" viewBox="0 0 18 17"><path d="M9 2L15.800 15H2.200z" fill="#f4bd00" stroke="#f4bd00" stroke-width="1.800" stroke-linejoin="round"/><rect x="8" y="5.500" width="2" height="6" fill="#fff"/><rect x="8" y="12.500" width="2" height="2" fill="#fff"/></svg>
<div class="t u" style="left:1998px;top:4px;height:40px;line-height:40px;color:#505050">7</div>
<div class="a" style="left:2024px;top:10px;width:1px;height:24px;background:#ccc"></div>
<svg class="a" style="left:2040px;top:10px" width="24" height="24" viewBox="0 0 24 24"><g fill="#6e6e6e"><rect x="8.700" y="1.300" width="6.600" height="7" rx="1.300" transform="rotate(0 12 12)"/><rect x="8.700" y="1.300" width="6.600" height="7" rx="1.300" transform="rotate(60 12 12)"/><rect x="8.700" y="1.300" width="6.600" height="7" rx="1.300" transform="rotate(120 12 12)"/><rect x="8.700" y="1.300" width="6.600" height="7" rx="1.300" transform="rotate(180 12 12)"/><rect x="8.700" y="1.300" width="6.600" height="7" rx="1.300" transform="rotate(240 12 12)"/><rect x="8.700" y="1.300" width="6.600" height="7" rx="1.300" transform="rotate(300 12 12)"/></g><circle cx="12" cy="12" r="5.700" fill="none" stroke="#6e6e6e" stroke-width="4.800"/></svg>
<div class="a" style="left:2092.300px;top:12.4px;width:5px;height:5px;border-radius:2.500px;background:#6e6e6e"></div>
<div class="a" style="left:2092.300px;top:20.2px;width:5px;height:5px;border-radius:2.500px;background:#6e6e6e"></div>
<div class="a" style="left:2092.300px;top:28.0px;width:5px;height:5px;border-radius:2.500px;background:#6e6e6e"></div>
<svg class="a" style="left:2126px;top:13px" width="18" height="18" viewBox="0 0 18 18"><path d="M3 2.500L17 16.500M17 2.500L3 16.500" stroke="#6e6e6e" stroke-width="2.800"/></svg>
<div class="a" style="left:1331px;top:707px;width:811px;height:1px;background:#cbcdd1"></div>
<div class="a" style="left:1331px;top:708px;width:811px;height:34px;background:#fff"></div>
<div class="a" style="left:1465px;top:709px;width:61px;height:33px;background:#f3f3f3"></div>
<div class="t u" style="left:1342px;top:708px;height:34px;line-height:35px;font-size:19px;color:#881280">html<span style="color:#994500">.no-touch</span></div>
<div class="t u" style="left:1475px;top:708px;height:34px;line-height:35px;font-size:19px;color:#881280">body</div>
<div class="a" style="left:1331px;top:742px;width:811px;height:1px;background:#cbcdd1"></div>
<div class="a" style="left:1331px;top:743px;width:811px;height:40px;background:#f3f3f3"></div>
<div class="a" style="left:1331px;top:783px;width:811px;height:1px;background:#cbcdd1"></div>
<div class="a" style="left:1331px;top:781.500px;width:75px;height:2.500px;background:#1a73e8"></div>
<div class="t u" style="left:1345px;top:744.7px;height:40px;line-height:40px;letter-spacing:-0.20px;color:#333">Styles</div>
<div class="t u" style="left:1420px;top:744.7px;height:40px;line-height:40px;letter-spacing:0.70px;color:#5f6368">Computed</div>
<div class="t u" style="left:1534px;top:744.7px;height:40px;line-height:40px;letter-spacing:0.00px;color:#5f6368">Event Listeners</div>
<div class="t u" style="left:1681px;top:744.7px;height:40px;line-height:40px;letter-spacing:0.42px;color:#5f6368">DOM Breakpoints</div>
<div class="t u" style="left:1852px;top:744.7px;height:40px;line-height:40px;letter-spacing:0.27px;color:#5f6368">Properties</div>
<div class="t u" style="left:1962px;top:744.7px;height:40px;line-height:40px;letter-spacing:0.15px;color:#5f6368">Accessibility</div>
<svg class="a" style="left:2085px;top:755px" width="16" height="16" viewBox="0 0 16 16"><path d="M2 2.500L7 8L2 13.500M8.500 2.500L13.500 8L8.500 13.500" fill="none" stroke="#5a5a5a" stroke-width="2"/></svg>
<div class="a" style="left:1331px;top:784px;width:811px;height:40px;background:#f3f3f3"></div>
<div class="a" style="left:1335px;top:788px;width:596px;height:30px;background:#fff"></div>
<div class="t u" style="left:1341.5px;top:789.5px;height:30px;line-height:31px;color:#777">Filter</div>
<div class="t m" style="left:1947px;top:790.5px;height:30px;line-height:30px;color:#505050;-webkit-text-stroke:.35px #505050">:hov</div>
<div class="t m" style="left:2002px;top:790.5px;height:30px;line-height:30px;color:#505050;-webkit-text-stroke:.35px #505050">.cls</div>
<svg class="a" style="left:2060px;top:794px" width="28" height="26" viewBox="0 0 28 26"><path d="M9.500 1.500V17.500M1.500 9.500H17.500" stroke="#6e6e6e" stroke-width="2"/><path d="M26 17V24.500H18.500z" fill="#6e6e6e"/></svg>
<svg class="a" style="left:2099px;top:794px" width="24" height="20" viewBox="0 0 24 20"><rect x="1" y="1" width="21" height="18" fill="none" stroke="#6e6e6e" stroke-width="1.600"/><path d="M16 1V19" stroke="#6e6e6e" stroke-width="1.600"/><path d="M12.500 4.500V15.500L5 10z" fill="#6e6e6e"/></svg>
<div class="a" style="left:1331px;top:1107px;width:804px;height:100px;background:#fafafa"></div>
<div class="a" style="left:1331px;top:881.0px;width:804px;height:1px;background:#d0d0d0"></div>
<div class="a" style="left:1331px;top:1004.0px;width:804px;height:1px;background:#d0d0d0"></div>
<div class="a" style="left:1331px;top:1106.0px;width:804px;height:1px;background:#d0d0d0"></div>
<div class="a" style="left:1331px;top:1206.5px;width:804px;height:1px;background:#d0d0d0"></div>
<div class="sl" style="left:1336.0px;top:829.5px;"><span class="g">element.style {</span></div>
<div class="sl" style="left:1336.0px;top:854.5px;"><span class="g">}</span></div>
<div class="sl" style="left:1336.0px;top:887.5px;">body <span class="g">{</span></div>
<div class="sl" style="left:1363.5px;top:912.0px;"><span class="pn">color</span>: <span style="display:inline-block;width:15px;height:15px;background:#333;vertical-align:-2px;margin:0 4px 0 2px"></span>#333;</div>
<div class="sl" style="left:1363.5px;top:934.0px;"><span class="pn">font-size</span>: 14px;</div>
<div class="sl" style="left:1363.5px;top:955.5px;"><span class="pn">font-family</span>: "Microsoft YaHei","Heiti SC","<span style="font-family:'Noto Serif CJK SC',serif;font-size:16px;line-height:0;color:#555">黑体</span>",Arial,sans-serif;</div>
<div class="sl" style="left:1336.0px;top:979.0px;"><span class="g">}</span></div>
<div class="sl" style="left:1336.0px;top:1009.5px;">body, <span class="g">ul, p, h1, h2, h3, h4, section {</span></div>
<div class="sl" style="left:1363.5px;top:1034.5px;"><span class="pn">margin</span>:<svg width="9" height="11" viewBox="0 0 9 11" style="vertical-align:-1px;margin:0 6px 0 5px"><path d="M0.500 0.500L8.500 5.500L0.500 10.500z" fill="#727272"/></svg>0;</div>
<div class="sl" style="left:1363.5px;top:1056.5px;"><span class="pn">padding</span>:<svg width="9" height="11" viewBox="0 0 9 11" style="vertical-align:-1px;margin:0 6px 0 5px"><path d="M0.500 0.500L8.500 5.500L0.500 10.500z" fill="#727272"/></svg>0;</div>
<div class="sl" style="left:1336.0px;top:1079.0px;"><span class="g">}</span></div>
<div class="sl" style="left:1336.0px;top:1111.0px;font-style:italic">body <span class="g">{</span></div>
<div class="sl" style="left:1363.5px;top:1136.5px;font-style:italic"><span class="pn">display</span>: block;</div>
<div class="sl" style="left:1363.5px;top:1158.5px;font-style:italic"><span class="pn">margin</span>:<svg width="9" height="11" viewBox="0 0 9 11" style="vertical-align:-1px;margin:0 6px 0 5px"><path d="M0.500 0.500L8.500 5.500L0.500 10.500z" fill="#727272"/></svg>8px;</div>
<div class="a" style="left:1364px;top:1168.5px;width:128px;height:1px;background:#222"></div>
<div class="sl" style="left:1336.0px;top:1181.0px;font-style:italic"><span class="g">}</span></div>
<div class="sl" style="right:10px;top:887.5px;color:#646464;text-decoration:underline;text-decoration-thickness:1px;text-underline-offset:2.5px">comm.v2.css?v=155:1</div>
<div class="sl" style="right:10px;top:1009.5px;color:#646464;text-decoration:underline;text-decoration-thickness:1px;text-underline-offset:2.5px">comm.v2.css?v=155:1</div>
<div class="sl" style="right:10px;top:1111.0px;color:#737373;font-style:italic">user agent stylesheet</div>
<div class="a" style="left:2135px;top:784px;width:7px;height:444px;background:#f1f1f1"></div>
<div class="a" style="left:2137px;top:809px;width:5px;height:237px;background:#c1c1c1"></div>
</body></html>
